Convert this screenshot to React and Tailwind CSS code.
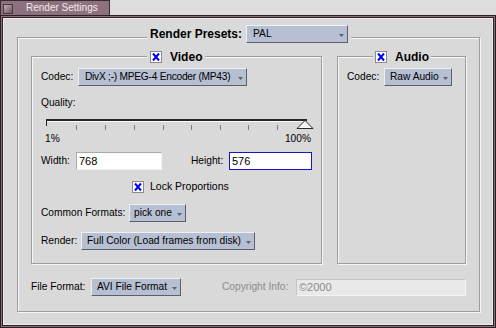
const BG = 'bg-[#d9d9d9]';

function Arrow() {
    return (
        <svg width="5" height="3" className="shrink-0 mt-[2px]">
            <path d="M0 0H5L2.5 3Z" fill="#5d616c" />
        </svg>
    );
}

function Check() {
    return (
        <svg width="12" height="12" className="shrink-0 block">
            <rect x="0.5" y="0.5" width="11" height="11" fill="#fff" stroke="#8a8a8a" />
            <path d="M3 2.5L9 9.5M9 2.5L3 9.5" stroke="#0000ff" strokeWidth="2" />
        </svg>
    );
}

function Drop({ children, className = '', textClass = '' }) {
    return (
        <div className={`flex items-center justify-between shrink-0 h-[18px] pr-[3px] bg-[#b7bfd2] border border-[#eef0f5] border-r-[#5b5f6b] border-b-[#5b5f6b] ${className}`}>
            <span className={`whitespace-nowrap leading-none ${textClass}`}>{children}</span>
            <Arrow />
        </div>
    );
}

const ticks = [32, 61, 90, 119, 147, 176, 204, 233];

export default function App() {
    return (
        <div className="w-[496px] h-[328px] bg-[#dddddd] font-['Liberation_Sans',Arial,sans-serif] text-[10.2px] text-black flex flex-col overflow-hidden">
            {/* tab */}
            <div className="flex h-[15px] shrink-0">
                <div className="w-[110px] h-[15px] bg-[#8e717f] border-t border-l border-r border-[#3b2a33] flex items-center">
                    <div className="ml-[2px] mt-[2px] w-[10px] h-[10px] border border-[#4a3540] bg-gradient-to-br from-[#c2adb8] to-[#6f5663]" />
                    <span className="ml-[13px] text-[#f3eaee] text-[10px] leading-none">Render Settings</span>
                </div>
            </div>

            {/* window frame */}
            <div className="h-[313px] border border-[#2c1f26]">
                <div className="h-full border border-[#8c6d7b]">
                    <div className="h-full border border-[#2c1f26]">
                        <div className={`h-full border border-[#eeeeee] ${BG} pl-[13px] pt-[6px]`}>
                            <fieldset className="w-[463px] pl-[13px] pr-[13px] pb-[15px] border border-[#9d9d9d] shadow-[1px_1px_0_#f7f7f7,inset_1px_1px_0_#f7f7f7]">
                                <legend className={`ml-[116px] px-[3px] h-[25px] ${BG}`}>
                                    <div className="flex items-center gap-[4px] h-[18px]">
                                        <span className="font-bold text-[12px] leading-none">Render Presets:</span>
                                        <Drop className="w-[102px] pl-[6px]">PAL</Drop>
                                    </div>
                                </legend>

                                <div className="flex gap-[15px]">
                                    {/* Video */}
                                    <fieldset className="w-[291px] pl-[9px] pb-[13px] border border-[#9d9d9d] shadow-[1px_1px_0_#f7f7f7,inset_1px_1px_0_#f7f7f7]">
                                        <legend className={`ml-[106px] px-[3px] h-[13px] ${BG}`}>
                                            <div className="flex items-center h-[13px]">
                                                <Check />
                                                <span className="ml-[8px] font-bold text-[12px] leading-none">Video</span>
                                            </div>
                                        </legend>
                                        <div className="flex flex-col">
                                            <div className="mt-[5px] flex items-center h-[18px]">
                                                <span className="w-[37px] shrink-0">Codec:</span>
                                                <Drop className="w-[169px] pl-[6px]" textClass="tracking-[-0.25px]">DivX ;-) MPEG-4 Encoder (MP43)</Drop>
                                            </div>
                                            <div className="mt-[11px] h-[12px] leading-[12px]">Quality:</div>
                                            <svg width="270" height="16" className="block mt-[7px] ml-[3px]">
                                                <rect x="2" y="3" width="261" height="2" fill="#262626" />
                                                <rect x="3" y="5" width="260" height="1" fill="#fafafa" />
                                                <rect x="2" y="3" width="1" height="7" fill="#262626" />
                                                {ticks.map(t => (
                                                    <rect key={t} x={t} y="9" width="1" height="5" fill="#7d7d7d" />
                                                ))}
                                                <path d="M261 4.5L269 12.5H253Z" fill="#f4f4f4" stroke="#2a2a2a" />
                                            </svg>
                                            <div className="mt-[1px] ml-[4px] w-[266px] h-[12px] leading-[12px] flex justify-between">
                                                <span>1%</span>
                                                <span>100%</span>
                                            </div>
                                            <div className="mt-[7px] flex items-center h-[18px]">
                                                <span className="w-[35px] shrink-0">Width:</span>
                                                <input readOnly value="768" className="w-[86px] h-[18px] px-[2px] text-[11px] bg-white border border-[#a8a8a8] border-r-[#f2f2f2] border-b-[#f2f2f2] outline-none" />
                                                <span className="ml-[29px] w-[38px] shrink-0">Height:</span>
                                                <input readOnly value="576" className="w-[83px] h-[18px] px-[2px] text-[11px] bg-white border border-[#1414c8] outline-none" />
                                            </div>
                                            <div className="mt-[11px] ml-[91px] flex items-center h-[12px]">
                                                <Check />
                                                <span className="ml-[6px] text-[10.5px]">Lock Proportions</span>
                                            </div>
                                            <div className="mt-[11px] flex items-center h-[18px]">
                                                <span className="w-[88px] shrink-0">Common Formats:</span>
                                                <Drop className="w-[57px] pl-[4px]">pick one</Drop>
                                            </div>
                                            <div className="mt-[10px] flex items-center h-[18px]">
                                                <span className="w-[40px] shrink-0">Render:</span>
                                                <Drop className="w-[174px] pl-[5px]">Full Color (Load frames from disk)</Drop>
                                            </div>
                                        </div>
                                    </fieldset>

                                    {/* Audio */}
                                    <fieldset className="w-[129px] pl-[9px] border border-[#9d9d9d] shadow-[1px_1px_0_#f7f7f7,inset_1px_1px_0_#f7f7f7]">
                                        <legend className={`ml-[26px] px-[2px] h-[13px] ${BG}`}>
                                            <div className="flex items-center h-[13px]">
                                                <Check />
                                                <span className="ml-[8px] font-bold text-[12px] leading-none">Audio</span>
                                            </div>
                                        </legend>
                                        <div className="mt-[5px] flex items-center h-[18px]">
                                            <span className="w-[37px] shrink-0">Codec:</span>
                                            <Drop className="w-[68px] pl-[5px]">Raw Audio</Drop>
                                        </div>
                                    </fieldset>
                                </div>

                                <div className="mt-[14px] flex items-center h-[18px]">
                                    <span className="w-[60px] shrink-0">File Format:</span>
                                    <Drop className="w-[90px] pl-[5px]">AVI File Format</Drop>
                                    <span className="ml-[41px] w-[74px] shrink-0 text-[#8c8c8c]">Copyright Info:</span>
                                    <input readOnly value="©2000" className="w-[170px] h-[17px] px-[2px] text-[11px] text-[#8c8c8c] bg-[#e9e9e9] border border-[#c4c4c4] border-r-[#f4f4f4] border-b-[#f4f4f4] outline-none" />
                                </div>
                            </fieldset>
                        </div>
                    </div>
                </div>
            </div>
        </div>
    );
}
